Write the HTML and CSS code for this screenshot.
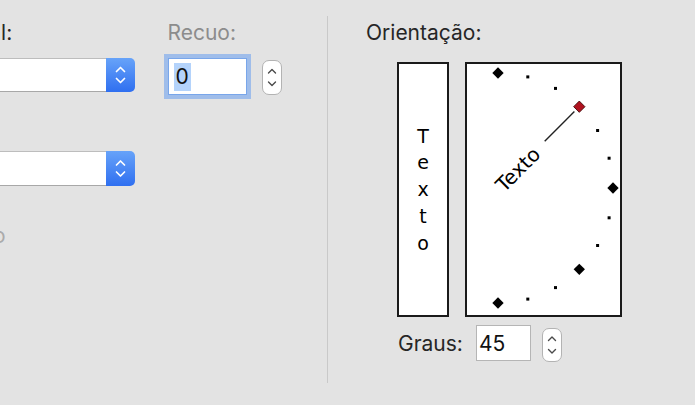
FILE: index.html
```html
<!DOCTYPE html>
<html lang="pt">
<head>
<meta charset="utf-8">
<link rel="stylesheet" href="styles.css">
</head>
<body>
<div class="window">
  <div class="left">
    <div class="col1">
      <div class="label">Horizontal:</div>
      <div class="popup p1">
        <div class="popup-field"></div>
        <div class="popup-btn">
          <svg width="29" height="34" viewBox="0 0 29 34"><path d="M10.5 13.5 L14.5 9.5 L18.5 13.5 M10.5 20.5 L14.5 24.5 L18.5 20.5" fill="none" stroke="#fff" stroke-width="1.7" stroke-linecap="round" stroke-linejoin="round"/></svg>
        </div>
      </div>
      <div class="label hidden-label">Vertical:</div>
      <div class="popup p2">
        <div class="popup-field"></div>
        <div class="popup-btn">
          <svg width="29" height="35" viewBox="0 0 29 35"><path d="M10.5 14 L14.5 10 L18.5 14 M10.5 21 L14.5 25 L18.5 21" fill="none" stroke="#fff" stroke-width="1.7" stroke-linecap="round" stroke-linejoin="round"/></svg>
        </div>
      </div>
      <div class="disabled-wrap"><div class="label disabled">Reduzir texto</div></div>
    </div>
    <div class="col2">
      <div class="label muted">Recuo:</div>
      <div class="field-row">
        <div class="field focused"><span class="sel">0</span></div>
        <div class="stepper s1">
          <svg width="20" height="35" viewBox="0 0 20 35"><path d="M6.5 13 L10 9.5 L13.5 13 M6.5 22 L10 25.5 L13.5 22" fill="none" stroke="#4a4a4a" stroke-width="1.4" stroke-linecap="round" stroke-linejoin="round"/></svg>
        </div>
      </div>
    </div>
  </div>
  <div class="sep"></div>
  <div class="right">
    <div class="label">Orientação:</div>
    <div class="boxes">
      <div class="vbox">
        <span>T</span><span>e</span><span>x</span><span>t</span><span>o</span>
      </div>
      <div class="dial">
        <svg width="153" height="251" viewBox="0 0 153 251">
          <g fill="#000">
            <rect x="27" y="5" width="8" height="8" transform="rotate(45 31 9)"/>
            <rect x="142" y="120" width="8" height="8" transform="rotate(45 146 124)"/>
            <rect x="108.3" y="201.3" width="8" height="8" transform="rotate(45 112.3 205.3)"/>
            <rect x="27" y="235" width="8" height="8" transform="rotate(45 31 239)"/>
            <rect x="59.3" y="11.4" width="3" height="3"/>
            <rect x="87" y="22.9" width="3" height="3"/>
            <rect x="129.1" y="65" width="3" height="3"/>
            <rect x="140.6" y="92.7" width="3" height="3"/>
            <rect x="140.6" y="152.3" width="3" height="3"/>
            <rect x="129.1" y="180" width="3" height="3"/>
            <rect x="87" y="222.1" width="3" height="3"/>
            <rect x="59.3" y="233.6" width="3" height="3"/>
          </g>
          <line x1="77.7" y1="77.3" x2="107.4" y2="47.6" stroke="#222" stroke-width="1.4"/>
          <rect x="108.3" y="38.7" width="8" height="8" transform="rotate(45 112.3 42.7)" fill="#b0121f" stroke="#3a0000" stroke-width="0.8"/>
          <text x="32" y="125" transform="rotate(-45 31 124)" class="dial-text" dominant-baseline="central">Texto</text>
        </svg>
      </div>
    </div>
    <div class="graus-row">
      <div class="label">Graus:</div>
      <div class="field small"><span>45</span></div>
      <div class="stepper s2">
        <svg width="20" height="34" viewBox="0 0 20 34"><path d="M6.5 12.5 L10 9 L13.5 12.5 M6.5 21.5 L10 25 L13.5 21.5" fill="none" stroke="#4a4a4a" stroke-width="1.4" stroke-linecap="round" stroke-linejoin="round"/></svg>
      </div>
    </div>
  </div>
</div>
</body>
</html>
```

FILE: styles.css
```css
html, body {
  margin: 0;
  padding: 0;
  background: #e3e3e3;
  overflow: hidden;
}
body {
  font-family: Inter, "Liberation Sans", sans-serif;
  font-size: 21px;
  color: #262626;
}
.window {
  display: flex;
  width: 695px;
  height: 405px;
}
.left {
  width: 327px;
  flex: none;
  overflow: hidden;
  display: flex;
}
.label {
  line-height: 24px;
  height: 24px;
  white-space: nowrap;
}
.muted { color: #8c8c8c; }
.disabled-wrap {
  width: 101px;
  margin-top: 38px;
  display: flex;
  justify-content: flex-end;
}
.disabled { color: #ababab; flex: none; }
.hidden-label { margin-top: 17px; visibility: hidden; }
.col1 {
  flex: none;
  width: 230px;
  margin-left: -95.5px;
  padding-top: 21px;
  display: flex;
  flex-direction: column;
}
.popup {
  display: flex;
  height: 34px;
  margin-top: 13px;
}
.popup.p2 { height: 35px; margin-top: 18px; }
.popup-field {
  flex: 1;
  background: #fff;
  border: 1px solid #bdbdbd;
  border-bottom-color: #a8a8a8;
  border-right: none;
}
.popup-btn {
  width: 29px;
  flex: none;
  border-radius: 0 5px 5px 0;
  background: linear-gradient(#67a3f9, #2f6ff0);
  display: flex;
}
.col2 {
  flex: none;
  margin-left: 33px;
  padding-top: 21px;
}
.field-row {
  display: flex;
  align-items: flex-start;
  margin-top: 13px;
}
.field {
  background: #fff;
  border: 1px solid #b5b5b5;
  box-sizing: border-box;
  display: flex;
  align-items: center;
  color: #111;
}
.field.focused {
  width: 79px;
  height: 37px;
  border-color: #79a6ea;
  box-shadow: 0 0 0 4px rgba(130, 172, 236, 0.7);
  padding-left: 5px;
}
.sel {
  background: #b4d3fb;
  line-height: 28px;
  padding: 0 2px;
}
.stepper {
  width: 20px;
  box-sizing: border-box;
  background: #fff;
  border: 1px solid #b3b3b3;
  border-radius: 7px;
  display: flex;
  align-items: center;
  justify-content: center;
  overflow: hidden;
}
.stepper svg { flex: none; }
.s1 { height: 35px; margin-left: 15px; margin-top: 2px; }
.sep {
  width: 1px;
  flex: none;
  background: #c9c9c9;
  margin: 16px 0 22px;
}
.right {
  padding-left: 38px;
  padding-top: 21px;
}
.boxes {
  display: flex;
  margin-top: 17px;
  margin-left: 31px;
  gap: 16px;
}
.vbox {
  width: 52px;
  height: 255px;
  box-sizing: border-box;
  background: #fff;
  border: 2px solid #1a1a1a;
  display: flex;
  flex-direction: column;
  align-items: center;
  justify-content: center;
  font-family: "DejaVu Sans", Verdana, sans-serif;
  font-size: 19px;
  line-height: 26.7px;
  color: #000;
}
.dial {
  width: 157px;
  height: 255px;
  box-sizing: border-box;
  background: #fff;
  border: 2px solid #1a1a1a;
}
.dial svg { display: block; }
.dial-text {
  font-family: "DejaVu Sans", Verdana, sans-serif;
  font-size: 20px;
  fill: #000;
}
.graus-row {
  display: flex;
  align-items: center;
  margin-left: 32px;
  margin-top: 7px;
}
.graus-row .label { margin-top: 2px; }
.field.small {
  width: 55px;
  height: 36px;
  margin-left: 13px;
  padding-left: 2px;
  padding-top: 1px;
}
.s2 { height: 34px; margin-left: 11px; margin-top: 4px; }
```
